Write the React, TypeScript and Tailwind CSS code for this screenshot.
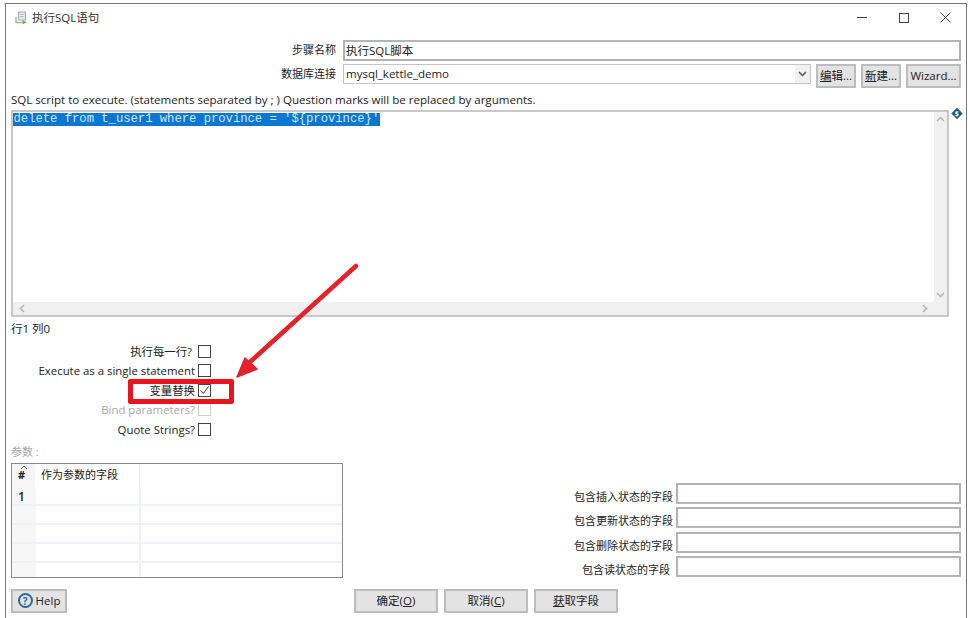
const font = '[font-family:"Open_Sans","Noto_Sans_CJK_SC",sans-serif]';

function Btn({ className, children }: { className: string; children: React.ReactNode }) {
  return (
    <div className={`flex items-center justify-center border-2 border-[#bdbdbd] bg-[#e3e3e3] text-[11.5px] text-[#222] ${className}`}>
      {children}
    </div>
  );
}

function Check({ label, checked, disabled, trail }: { label: string; checked?: boolean; disabled?: boolean; trail?: boolean }) {
  return (
    <div className="flex h-[19.5px] items-center">
      <div className={`w-[184px] whitespace-nowrap text-right text-[11.4px] ${trail ? 'pr-[3px]' : ''} ${disabled ? 'text-[#a8a8a8]' : 'text-[#222]'}`}>{label}</div>
      <div className={`ml-[3px] flex h-[13px] w-[13px] items-center justify-center border bg-white ${disabled ? 'border-[#cfcfcf]' : 'border-[#444]'}`}>
        {checked && (
          <svg width="11" height="11" viewBox="0 0 11 11" fill="none" stroke="#333" strokeWidth="1">
            <path d="M1.5 5.5 L4.2 8.5 L9.5 1.5" />
          </svg>
        )}
      </div>
    </div>
  );
}

function Field({ label, extra }: { label: string; extra?: boolean }) {
  return (
    <div className="flex h-[21px]">
      <div className={`w-[330px] whitespace-nowrap pt-[5px] text-right text-[11px] leading-[18px] text-[#222] ${extra ? 'pr-[3px]' : ''}`}>{label}</div>
      <div className="ml-[3px] h-full flex-1 border-2 border-[#b4b4b4] bg-white" />
    </div>
  );
}

export default function App() {
  return (
    <div className={`relative h-[618px] w-[968px] overflow-hidden bg-white pl-[5px] pr-[1px] pt-[3px] text-[#222] ${font}`}>
      <div className="flex h-[615px] flex-col border-l border-r border-t border-[#777] px-[5px]">
        {/* title bar */}
        <div className="flex h-[27px] shrink-0 items-center">
          <svg className="ml-[4px]" width="12" height="14" viewBox="0 0 12 14" fill="none">
            <path d="M3.500 1h7v8h-7z" fill="#e6ebef" stroke="#a3aeb6" strokeWidth="1.200" />
            <path d="M5 3.500h4M5 5.500h4" stroke="#b4bdc4" strokeWidth="1" />
            <path d="M1 6v5.500h6" stroke="#a3aeb6" strokeWidth="1.400" />
            <path d="M7.500 9l4 2.300-4 2.300z" fill="#5fb04a" />
          </svg>
          <div className="ml-[5px] text-[11.5px] text-[#333]">执行SQL语句</div>
          <div className="ml-auto flex items-center">
            <div className="mr-[32px] h-[1px] w-[10px] bg-[#444]" />
            <div className="mr-[31px] h-[10px] w-[10px] border border-[#444]" />
            <svg className="mr-[10px]" width="11" height="11" viewBox="0 0 11 11" stroke="#444" strokeWidth="1">
              <path d="M.5.5l10 10M10.500.5l-10 10" />
            </svg>
          </div>
        </div>

        {/* step name */}
        <div className="mt-[9px] flex h-[21px] shrink-0 items-center">
          <div className="w-[325px] whitespace-nowrap text-right text-[11px]">步骤名称</div>
          <div className="ml-[7px] flex h-full flex-1 items-center border-2 border-[#b4b4b4] bg-white pl-[1px] text-[11.5px]">执行SQL脚本</div>
        </div>

        {/* connection */}
        <div className="mt-[3px] flex h-[25px] shrink-0 items-start">
          <div className="flex h-[20px] w-[325px] items-center justify-end whitespace-nowrap text-[11px]">数据库连接</div>
          <div className="ml-[7px] flex h-[20px] w-[468px] items-center border border-[#c4c4c4] bg-white pl-[2px] text-[11.5px]">
            mysql_kettle_demo
            <div className="ml-auto flex h-full w-[15px] items-center justify-center bg-[#f0f0f0]">
              <svg width="9" height="6" viewBox="0 0 9 6" fill="none" stroke="#555" strokeWidth="1.5">
                <path d="M1 1l3.500 3.500L8 1" />
              </svg>
            </div>
          </div>
          <Btn className="ml-[5px] h-[24px] w-[40px]"><span><u>编</u>辑...</span></Btn>
          <Btn className="ml-[5px] h-[24px] w-[40px]"><span><u>新</u>建...</span></Btn>
          <Btn className="ml-[5px] h-[24px] w-[55px]">Wizard...</Btn>
        </div>

        <div className="mt-[1px] flex h-[19px] shrink-0 items-center whitespace-nowrap text-[11.55px]">
          SQL script to execute. (statements separated by ; ) Question marks will be replaced by arguments.
        </div>

        {/* editor */}
        <div className="mt-[1px] flex h-[207px] shrink-0">
          <div className="flex w-[940px] flex-col border-2 border-[#c8c8c8] bg-white">
            <div className="flex min-h-0 flex-1">
              <div className="flex-1">
                <div className="h-[13px] w-fit translate-y-[1px] whitespace-nowrap bg-[#0a78d2] pl-[0.5px] pr-[1px] font-['Liberation_Mono',monospace] text-[12.2px] leading-[13px] text-[#cfe6fa]">
                  delete from t_user1 where province = '{'${province}'}'
                </div>
              </div>
              <div className="flex w-[13px] flex-col items-center justify-between bg-[#f0f0f0] py-[4px]">
                <svg width="9" height="6" viewBox="0 0 9 6" fill="none" stroke="#b4b4b4" strokeWidth="1.5">
                  <path d="M1 5l3.500-3.500L8 5" />
                </svg>
                <svg width="9" height="6" viewBox="0 0 9 6" fill="none" stroke="#b4b4b4" strokeWidth="1.5">
                  <path d="M1 1l3.500 3.500L8 1" />
                </svg>
              </div>
            </div>
            <div className="flex h-[13px] shrink-0 items-center justify-between bg-[#f0f0f0] pl-[6px] pr-[19px]">
              <svg width="6" height="9" viewBox="0 0 6 9" fill="none" stroke="#b4b4b4" strokeWidth="1.5">
                <path d="M5 1L1.500 4.500 5 8" />
              </svg>
              <svg width="6" height="9" viewBox="0 0 6 9" fill="none" stroke="#b4b4b4" strokeWidth="1.5">
                <path d="M1 1l3.500 3.500L1 8" />
              </svg>
            </div>
          </div>
          <div className="flex-1">
            <div className="ml-[4px] flex h-[8px] w-[8px] -translate-y-[0.5px] rotate-45 items-center justify-center bg-[#1f5b8a]">
              <span className="-rotate-45 text-[7px] font-bold leading-none text-white">$</span>
            </div>
          </div>
        </div>

        <div className="mt-[3px] flex h-[18px] shrink-0 items-center text-[11.5px]">行1 列0</div>

        {/* options */}
        <div className="mt-[3.5px] shrink-0">
          <Check label="执行每一行?" trail />
          <Check label="Execute as a single statement" />
          <Check label="变量替换" checked />
          <Check label="Bind parameters?" disabled />
          <Check label="Quote Strings?" />
        </div>

        <div className="mt-[4.5px] flex h-[18px] shrink-0 items-center text-[11px] text-[#a8a8a8]">参数 :</div>

        {/* parameters + status fields */}
        <div className="mt-[1px] flex h-[115px] shrink-0">
          <div className="flex w-[332px] flex-col border border-[#8a8a8a] bg-white">
            <div className="flex h-[23px] shrink-0">
              <div className="flex w-[23px] flex-col items-center bg-[#f6f6f6] text-[11px] font-bold leading-[9px]">
                <svg className="mt-[1px]" width="8" height="5" viewBox="0 0 8 5" fill="none" stroke="#555" strokeWidth="1">
                  <path d="M1 4l3-3 3 3" />
                </svg>
                <span className="-translate-x-[2px]">#</span>
              </div>
              <div className="flex w-[105px] items-center border-r border-[#eef1f5] pl-[6px] text-[11px]">作为参数的字段</div>
            </div>
            {['1', '', '', '', ''].map((n, i) => (
              <div key={i} className={`flex shrink-0 border-[#eef1f5] ${i < 4 ? 'h-[19px] border-b-2' : 'h-[14px]'}`}>
                <div className="flex w-[24px] items-center bg-[#f6f6f6] pl-[6px] pt-[4px] text-[12px] font-semibold">{n}</div>
                <div className="w-[105px] border-r-2 border-[#eef1f5]" />
              </div>
            ))}
          </div>
          <div className="flex flex-1 flex-col gap-[3.5px] pt-[20px]">
            <Field label="包含插入状态的字段" />
            <Field label="包含更新状态的字段" />
            <Field label="包含删除状态的字段" />
            <Field label="包含读状态的字段" extra />
          </div>
        </div>

        {/* bottom buttons */}
        <div className="mt-[11px] flex h-[24px] shrink-0">
          <Btn className="h-full w-[56px]">
            <span className="mr-[3px] flex h-[15px] w-[15px] items-center justify-center rounded-full border-2 border-[#2b6a9b] text-[10px] font-bold leading-none text-[#2b6a9b]">?</span>
            Help
          </Btn>
          <Btn className="ml-[287px] h-full w-[84px]"><span>确定(<u>O</u>)</span></Btn>
          <Btn className="ml-[6px] h-full w-[84px]"><span>取消(<u>C</u>)</span></Btn>
          <Btn className="ml-[6px] h-full w-[84px]"><span><u>获</u>取字段</span></Btn>
        </div>
      </div>

      {/* annotation */}
      <div className="absolute left-[128px] top-[379px] h-[25px] w-[106px] rounded-[2px] border-[5px] border-[#e8141f]" />
      <svg className="absolute left-0 top-0" width="968" height="618" fill="none">
        <path d="M356 266 L250 362" stroke="#e8202a" strokeWidth="4.5" strokeLinecap="round" />
        <path d="M237 377 L245 358 L257 369 Z" fill="#e8202a" stroke="#e8202a" strokeWidth="1.5" strokeLinejoin="round" />
      </svg>
    </div>
  );
}
